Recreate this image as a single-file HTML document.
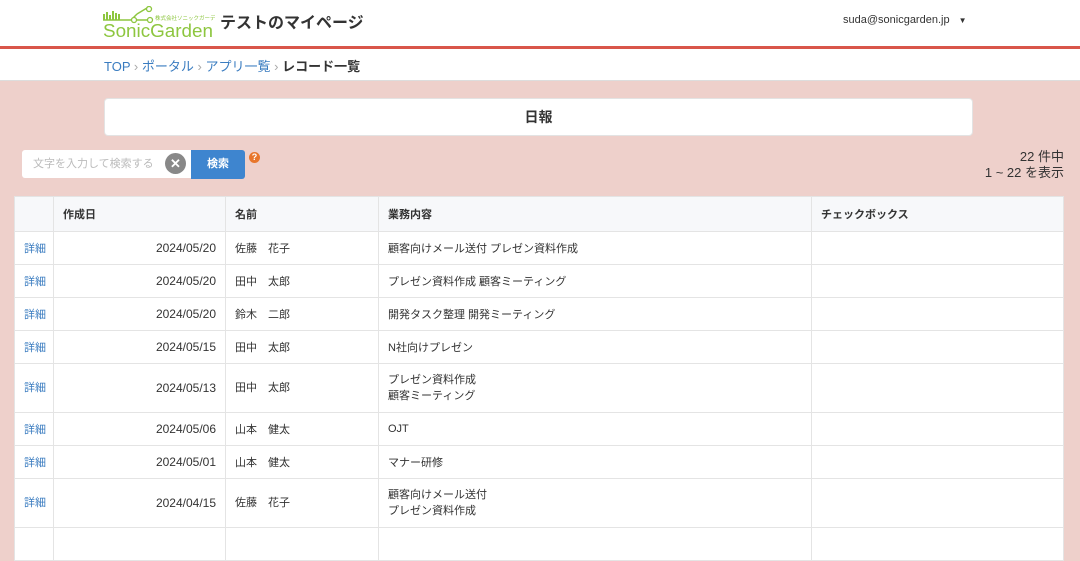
<!DOCTYPE html>
<html><head><meta charset="utf-8"><style>
*{box-sizing:border-box;margin:0;padding:0}
body{width:1080px;height:532px;overflow:hidden;background:#eed0cb;font-family:"Liberation Sans","Noto Sans CJK JP",sans-serif;color:#333;font-size:12px;position:relative}
.hdr{position:absolute;left:0;top:0;width:1080px;height:49px;background:#fff;border-bottom:3px solid #d9564a}
.bc{position:absolute;left:0;top:49px;width:1080px;height:32px;background:#fff;border-bottom:1px solid #ddd}
.bc span{position:absolute;top:7px;font-size:13px}
a{color:#3a7cc0;text-decoration:none}
.card{position:absolute;left:104px;top:98px;width:869px;height:38px;background:#fff;border-radius:4px;border:1px solid #e3e3e3;text-align:center;line-height:36px;font-size:14px;font-weight:bold}
table{position:absolute;left:14px;top:196px;width:1050px;border-collapse:collapse;background:#fff;table-layout:fixed}
td,th{border:1px solid #e4e4e4;padding:0 9px;font-size:11px;text-align:left;vertical-align:middle;white-space:nowrap}
th{height:35px;background:#f7f8fa;font-weight:bold}
td{height:33px}
td:first-child{padding:0 0 0 9px}
tr.t td{height:49px;line-height:16px}
td.d{text-align:right;font-size:12px}
</style></head><body>
<div class="hdr">
<svg style="position:absolute;left:103px;top:6px" width="112" height="34" viewBox="0 0 112 34">
<g fill="#8dc63f"><rect x="0" y="8" width="2" height="6"/><rect x="3" y="6" width="2" height="8"/><rect x="6" y="9" width="2" height="5"/><rect x="9" y="5" width="2" height="9"/><rect x="12" y="7" width="2" height="7"/><rect x="15" y="8" width="2" height="6"/></g>
<path d="M0 14H28L34 8M34 8L44 2M34 14H45" stroke="#8dc63f" stroke-width="1.5" fill="none"/>
<circle cx="46" cy="3" r="2.5" fill="#fff" stroke="#8dc63f" stroke-width="1.3"/><circle cx="31" cy="14" r="2.5" fill="#fff" stroke="#8dc63f" stroke-width="1.3"/><circle cx="47" cy="14" r="2.5" fill="#fff" stroke="#8dc63f" stroke-width="1.3"/>
<text x="52" y="14" font-size="5.5" fill="#8dc63f" font-family="Noto Sans CJK JP,sans-serif">株式会社ソニックガーデン</text>
<text x="0" y="31" font-size="18" fill="#8dc63f" font-family="Liberation Sans,sans-serif" textLength="110" lengthAdjust="spacingAndGlyphs">SonicGarden</text>
</svg>
<div style="position:absolute;left:220px;top:9px;font-size:16px;font-weight:bold">テストのマイページ</div>
<div style="position:absolute;left:843px;top:14px;font-size:11px">suda@sonicgarden.jp <span style="font-size:8px;margin-left:6px">▼</span></div>
</div>
<div class="bc"><span style="left:104px"><a>TOP</a> <span style="position:static;color:#aaa">›</span> <a>ポータル</a> <span style="position:static;color:#aaa">›</span> <a>アプリ一覧</a> <span style="position:static;color:#aaa">›</span> <b>レコード一覧</b></span></div>
<div class="card">日報</div>
<div style="position:absolute;left:22px;top:150px;width:170px;height:28px;background:#fff;border-radius:3px 0 0 3px;color:#bbb;font-size:11px;line-height:28px;padding-left:11px">文字を入力して検索する</div>
<div style="position:absolute;left:165px;top:153px;width:21px;height:21px;border-radius:50%;background:#888;color:#fff;font-size:13px;font-weight:bold;text-align:center;line-height:21px">✕</div>
<div style="position:absolute;left:191px;top:150px;width:54px;height:29px;background:#3e85cf;color:#fff;border-radius:0 3px 3px 0;font-size:11px;font-weight:bold;text-align:center;line-height:29px">検索</div>
<div style="position:absolute;left:249px;top:152px;width:11px;height:11px;border-radius:50%;background:#e8762c;color:#fff;font-size:9px;font-weight:bold;text-align:center;line-height:11px">?</div>
<div style="position:absolute;right:16px;top:149px;text-align:right;font-size:13px;line-height:16px">22 件中<br>1 ~ 22 を表示</div>
<table>
<colgroup><col style="width:39px"><col style="width:172px"><col style="width:153px"><col style="width:433px"><col></colgroup>
<tr><th></th><th>作成日</th><th>名前</th><th>業務内容</th><th>チェックボックス</th></tr>
<tr><td><a>詳細</a></td><td class="d">2024/05/20</td><td>佐藤　花子</td><td>顧客向けメール送付 プレゼン資料作成</td><td></td></tr>
<tr><td><a>詳細</a></td><td class="d">2024/05/20</td><td>田中　太郎</td><td>プレゼン資料作成 顧客ミーティング</td><td></td></tr>
<tr><td><a>詳細</a></td><td class="d">2024/05/20</td><td>鈴木　二郎</td><td>開発タスク整理 開発ミーティング</td><td></td></tr>
<tr><td><a>詳細</a></td><td class="d">2024/05/15</td><td>田中　太郎</td><td>N社向けプレゼン</td><td></td></tr>
<tr class="t"><td><a>詳細</a></td><td class="d">2024/05/13</td><td>田中　太郎</td><td>プレゼン資料作成<br>顧客ミーティング</td><td></td></tr>
<tr><td><a>詳細</a></td><td class="d">2024/05/06</td><td>山本　健太</td><td>OJT</td><td></td></tr>
<tr><td><a>詳細</a></td><td class="d">2024/05/01</td><td>山本　健太</td><td>マナー研修</td><td></td></tr>
<tr class="t"><td><a>詳細</a></td><td class="d">2024/04/15</td><td>佐藤　花子</td><td>顧客向けメール送付<br>プレゼン資料作成</td><td></td></tr>
<tr><td></td><td></td><td></td><td></td><td></td></tr>
</table>
</body></html>
